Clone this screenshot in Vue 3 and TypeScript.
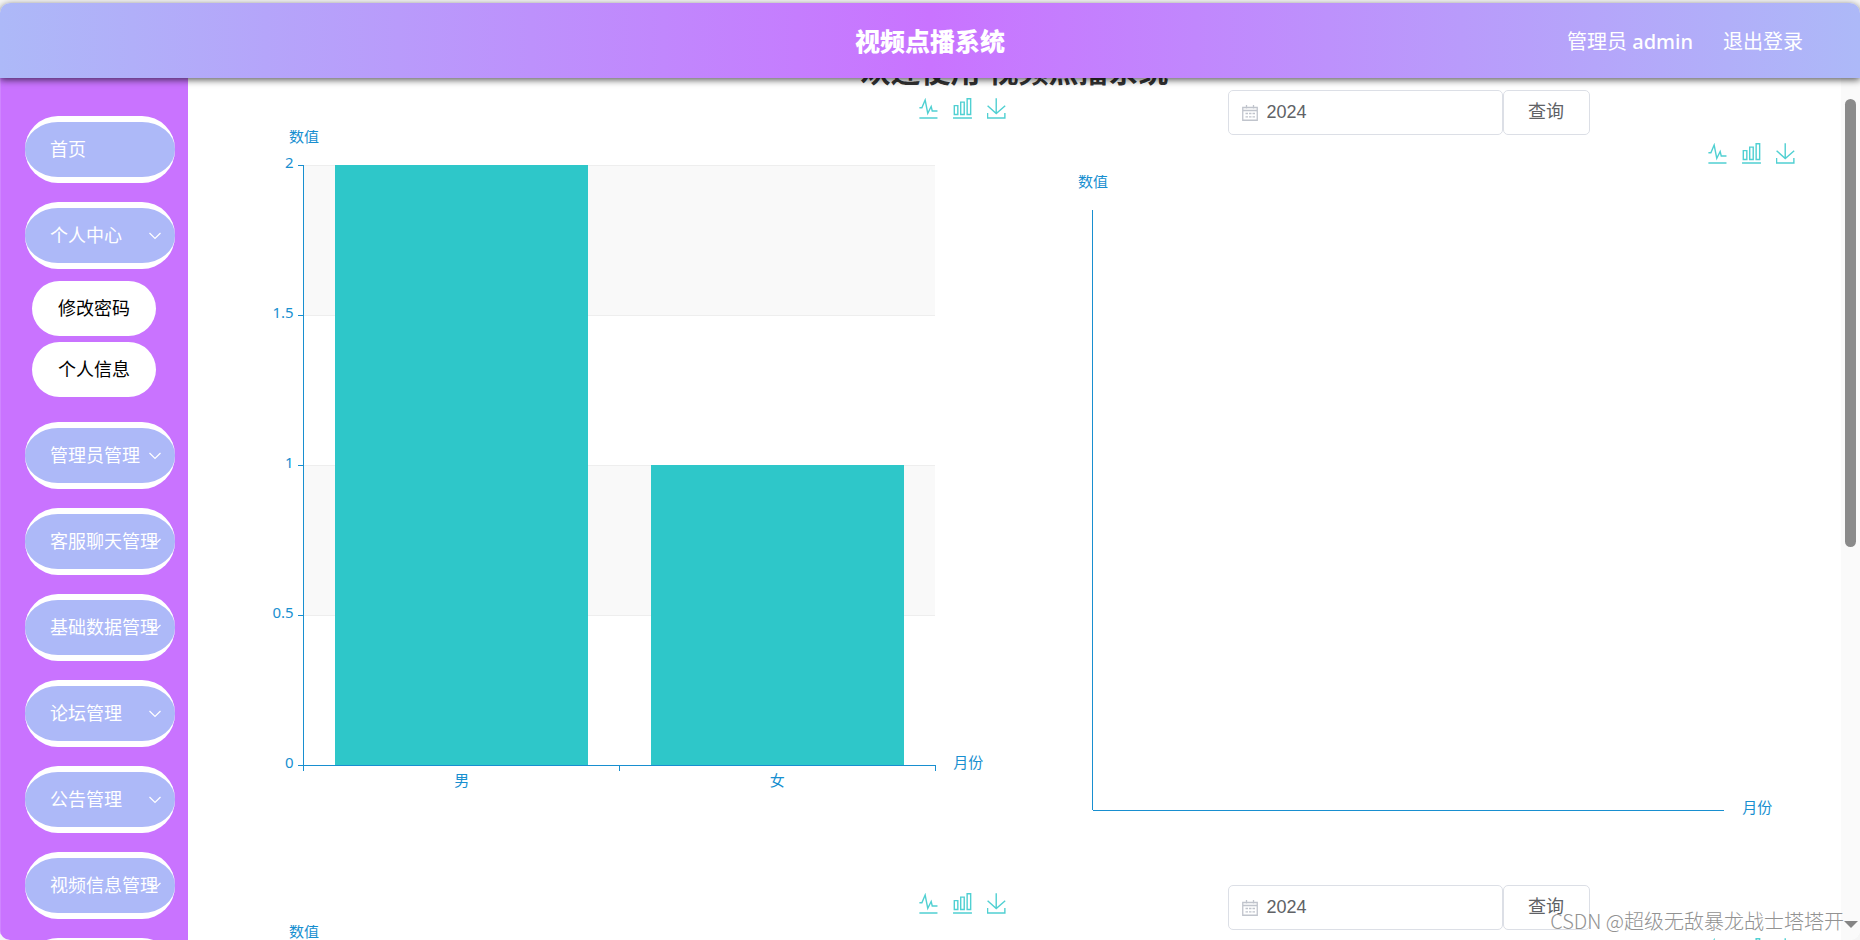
<script setup lang="ts">
import { ref } from 'vue'

interface MenuItem {
  label: string
  plain?: boolean
  children?: string[]
}

interface Bar {
  name: string
  value: number
}

interface Panel {
  id: string
  filter: boolean
  bars: Bar[]
}

const menu: MenuItem[] = [
  { label: '首页', plain: true },
  { label: '个人中心', children: ['修改密码', '个人信息'] },
  { label: '管理员管理' },
  { label: '客服聊天管理' },
  { label: '基础数据管理' },
  { label: '论坛管理' },
  { label: '公告管理' },
  { label: '视频信息管理' },
  { label: '' },
]

const genders: Bar[] = [
  { name: '男', value: 2 },
  { name: '女', value: 1 },
]

const panels: Panel[] = [
  { id: 'a', filter: false, bars: genders },
  { id: 'b', filter: true, bars: [] },
  { id: 'c', filter: false, bars: genders },
  { id: 'd', filter: true, bars: [] },
]

const tools = [
  { name: '切换为折线图', box: '3 2 54 58', d: 'M4.1,28.9h7.1l9.3-22l7.4,38l9.7-19.7l3,12.8h14.9M4.1,58h51.4' },
  { name: '切换为柱状图', box: '3 2 54 58', d: 'M6.7,22.9h10V48h-10V22.9zM24.9,13h10v35h-10V13zM43.2,3.5h10v44.5h-10V3.5zM3.1,58h53.7' },
  { name: '保存为图片', box: '3 2 54 58', d: 'M4.7,22.9L29.3,45.5L54.7,23.4M4.6,43.6L4.6,58L53.8,58L53.8,43.6M29.2,45.1L29.2,2' },
]

const years = ref<Record<string, string>>({ b: '2024', d: '2024' })

const plotTop = 35
const plotHeight = 600
const plotBottom = plotTop + plotHeight
const maxValue = 2
const ticks = [0, 0.5, 1, 1.5, 2]

const yOf = (v: number): number => plotBottom - (v / maxValue) * plotHeight
const slot = (bars: Bar[]): number => 80 / bars.length
const barX = (bars: Bar[], i: number): string => `${10 + slot(bars) * (i + 0.1)}%`
const barWidth = (bars: Bar[]): string => `${slot(bars) * 0.8}%`
const midX = (bars: Bar[], i: number): string => `${10 + slot(bars) * (i + 0.5)}%`
const edgeX = (bars: Bar[], i: number): string => `${10 + slot(bars) * i}%`
</script>

<template>
  <div class="window">
    <header class="topbar">
      <span></span>
      <strong class="brand">视频点播系统</strong>
      <nav class="account">
        <a href="#">管理员 <b>admin</b></a>
        <a href="#">退出登录</a>
      </nav>
    </header>

    <div class="body">
      <aside class="sidebar">
        <ul class="menu">
          <li v-for="item in menu" :key="item.label">
            <button class="entry" type="button">
              <span>{{ item.label }}</span>
              <svg v-if="!item.plain" class="chevron" viewBox="0 0 14 14" aria-hidden="true">
                <path d="M1.5 4 7 9.500 12.500 4" />
              </svg>
            </button>
            <ul v-if="item.children" class="submenu">
              <li v-for="child in item.children" :key="child">
                <a class="subentry" href="#">{{ child }}</a>
              </li>
            </ul>
          </li>
        </ul>
      </aside>

      <main class="content">
        <h1 class="welcome">欢迎使用 视频点播系统</h1>
        <div class="panels">
          <section v-for="panel in panels" :key="panel.id" class="panel">
            <form v-if="panel.filter" class="filter" @submit.prevent>
              <label class="year">
                <svg class="calendar" viewBox="0 0 16 16" aria-hidden="true">
                  <path d="M.75 2.500h14.500v12.750H.75zM.75 5.500h14.500M4.500 0v3.500M11.500 0v3.500" />
                  <path d="M3.500 8.500h2.500M7 8.500h2.500M10.500 8.500h2.500M3.500 11.800h2.500M7 11.800h2.500M10.500 11.800h2.500" />
                </svg>
                <input v-model="years[panel.id]" type="text" aria-label="年份" />
              </label>
              <button class="query" type="submit">查询</button>
            </form>

            <div class="toolbox">
              <button v-for="tool in tools" :key="tool.name" class="tool" type="button" :aria-label="tool.name">
                <svg :viewBox="tool.box" aria-hidden="true"><path :d="tool.d" /></svg>
              </button>
            </div>

            <svg class="chart" role="img" aria-label="柱状图">
              <template v-if="panel.bars.length">
                <rect class="band" x="10%" :y="yOf(2)" width="80%" height="150" />
                <rect class="band" x="10%" :y="yOf(1)" width="80%" height="150" />
                <line v-for="t in ticks" :key="`g${t}`" class="grid" x1="10%" x2="90%" :y1="yOf(t)" :y2="yOf(t)" />
                <rect
                  v-for="(bar, i) in panel.bars"
                  :key="bar.name"
                  class="bar"
                  :x="barX(panel.bars, i)"
                  :y="yOf(bar.value)"
                  :width="barWidth(panel.bars)"
                  :height="plotBottom - yOf(bar.value)"
                />
                <line v-for="t in ticks" :key="`t${t}`" class="axis" x1="9.2%" x2="10%" :y1="yOf(t)" :y2="yOf(t)" />
                <line
                  v-for="i in panel.bars.length + 1"
                  :key="`x${i}`"
                  class="axis"
                  :x1="edgeX(panel.bars, i - 1)"
                  :x2="edgeX(panel.bars, i - 1)"
                  :y1="plotBottom"
                  :y2="plotBottom + 6"
                />
                <text v-for="t in ticks" :key="`l${t}`" class="end" x="8.7%" :y="yOf(t) + 3">{{ t }}</text>
                <text v-for="(bar, i) in panel.bars" :key="`n${bar.name}`" class="mid" :x="midX(panel.bars, i)" :y="plotBottom + 21">{{ bar.name }}</text>
              </template>
              <line class="axis" x1="10%" x2="10%" :y1="plotTop" :y2="plotBottom" />
              <line class="axis" x1="10%" x2="90%" :y1="plotBottom" :y2="plotBottom" />
              <text class="mid" x="10%" y="12">数值</text>
              <text x="92.3%" :y="plotBottom + 3">月份</text>
            </svg>
          </section>
        </div>
      </main>

      <div class="scrollbar" aria-hidden="true">
        <span class="thumb"></span>
        <svg class="arrow" viewBox="0 0 14 8"><path d="M0 0h14L7 7z" /></svg>
      </div>
    </div>

    <p class="watermark">CSDN @超级无敌暴龙战士塔塔开</p>
  </div>
</template>

<style>
html,
body {
  margin: 0;
  background: #f5f5f5;
  overflow: hidden;
}
</style>

<style scoped>
* {
  box-sizing: border-box;
}

.window {
  position: relative;
  display: flex;
  flex-direction: column;
  height: 100vh;
  padding-top: 3px;
  overflow: hidden;
  font-family: 'Noto Sans', 'Noto Sans CJK SC', sans-serif;
}

ul {
  margin: 0;
  padding: 0;
  list-style: none;
}

button,
input {
  margin: 0;
  padding: 0;
  border: 0;
  background: none;
  font: inherit;
  color: inherit;
}

a {
  color: inherit;
  text-decoration: none;
}

.topbar {
  position: relative;
  z-index: 2;
  display: grid;
  grid-template-columns: 1fr auto 1fr;
  align-items: center;
  flex: none;
  height: 75px;
  padding: 0 57px;
  border-radius: 10px 10px 0 0;
  background: linear-gradient(90deg, #adb9f8, #c973ff 50%, #adb9f8);
  box-shadow: 0 2px 7px rgba(0, 0, 0, 0.65);
  color: #fff;
}

.brand {
  font-size: 25px;
  font-weight: 900;
  line-height: 36px;
}

.account {
  display: flex;
  justify-content: flex-end;
  gap: 30px;
  font-size: 20px;
}

.account b {
  font-weight: 500;
}

.body {
  display: flex;
  flex: 1;
  min-height: 0;
  overflow: hidden;
  border-radius: 0 0 10px 10px;
  background: #fff;
}

.sidebar {
  flex: none;
  width: 188px;
  padding: 38px 13px 0 24px;
  overflow: hidden;
  border-left: 1px solid #cf85ff;
  background: #c973ff;
}

.menu {
  display: flex;
  flex-direction: column;
  gap: 19px;
}

.entry {
  display: flex;
  align-items: center;
  justify-content: space-between;
  width: 150px;
  height: 67px;
  padding: 0 13px 0 25px;
  border: solid #fff;
  border-width: 6px 0;
  border-radius: 33px;
  background: #adb9f8;
  color: #fff;
  font-size: 18px;
  white-space: nowrap;
}

.entry span {
  flex: 1;
  width: 0;
  padding-bottom: 3px;
  text-align: left;
}

.chevron {
  flex: none;
  width: 14px;
  height: 14px;
  fill: none;
  stroke: #fff;
  stroke-width: 1.2;
}

.submenu {
  display: flex;
  flex-direction: column;
  gap: 6px;
  padding: 12px 19px 6px 7px;
}

.subentry {
  display: flex;
  align-items: center;
  justify-content: center;
  height: 55px;
  padding-bottom: 3px;
  border-radius: 28px;
  background: #fff;
  color: #000;
  font-size: 18px;
}

.content {
  flex: 1;
  min-width: 0;
  overflow: hidden;
}

.welcome {
  margin: -26px 0 0;
  color: #333;
  font-size: 30px;
  line-height: 38px;
  text-align: center;
}

.panels {
  display: grid;
  grid-template-columns: 1fr 1fr;
  padding: 0 38px 0 37px;
}

.panel {
  min-width: 0;
}

.filter {
  display: flex;
  justify-content: center;
  height: 45px;
  color: #606266;
  font-size: 18px;
}

.year {
  display: flex;
  align-items: center;
  gap: 9px;
  width: 275px;
  padding: 0 13px;
  border: 1px solid #dcdfe6;
  border-radius: 5px;
}

.year input {
  flex: 1;
  min-width: 0;
  outline: 0;
  font-family: 'Liberation Sans', sans-serif;
}

.calendar {
  flex: none;
  width: 16px;
  height: 16px;
  fill: none;
  stroke: #c0c4cc;
  stroke-width: 1.3;
}

.query {
  width: 87px;
  padding-bottom: 5px;
  border: 1px solid #dcdfe6;
  border-radius: 5px;
}

.toolbox {
  display: flex;
  justify-content: flex-end;
  gap: 15px;
  height: 40px;
  padding: 8px 8px 0 0;
}

.tool {
  width: 19px;
  height: 21px;
}

.tool svg {
  display: block;
  width: 19px;
  height: 21px;
  fill: none;
  stroke: #50d0d2;
  stroke-width: 4;
}

.chart {
  display: block;
  width: 100%;
  height: 710px;
  overflow: hidden;
  fill: #188fd0;
  font-size: 15px;
}

.chart line,
.chart rect {
  shape-rendering: crispEdges;
}

.band {
  fill: #f9f9f9;
}

.grid {
  stroke: #eee;
}

.bar {
  fill: #2ec7c9;
}

.axis {
  stroke: #188fd0;
}

.mid {
  text-anchor: middle;
}

.end {
  text-anchor: end;
}

.scrollbar {
  display: flex;
  flex-direction: column;
  align-items: center;
  justify-content: space-between;
  flex: none;
  width: 19px;
  padding: 21px 0 11px;
  background: #fafafa;
}

.thumb {
  width: 11px;
  height: 54%;
  border-radius: 6px;
  background: #8b8b8b;
}

.arrow {
  width: 14px;
  height: 8px;
  fill: #858585;
}

.watermark {
  position: absolute;
  right: 16px;
  bottom: 4px;
  z-index: 3;
  margin: 0;
  color: #929292;
  font-family: 'Noto Sans CJK SC', sans-serif;
  font-size: 20px;
  font-weight: 300;
  line-height: 30px;
}
</style>
